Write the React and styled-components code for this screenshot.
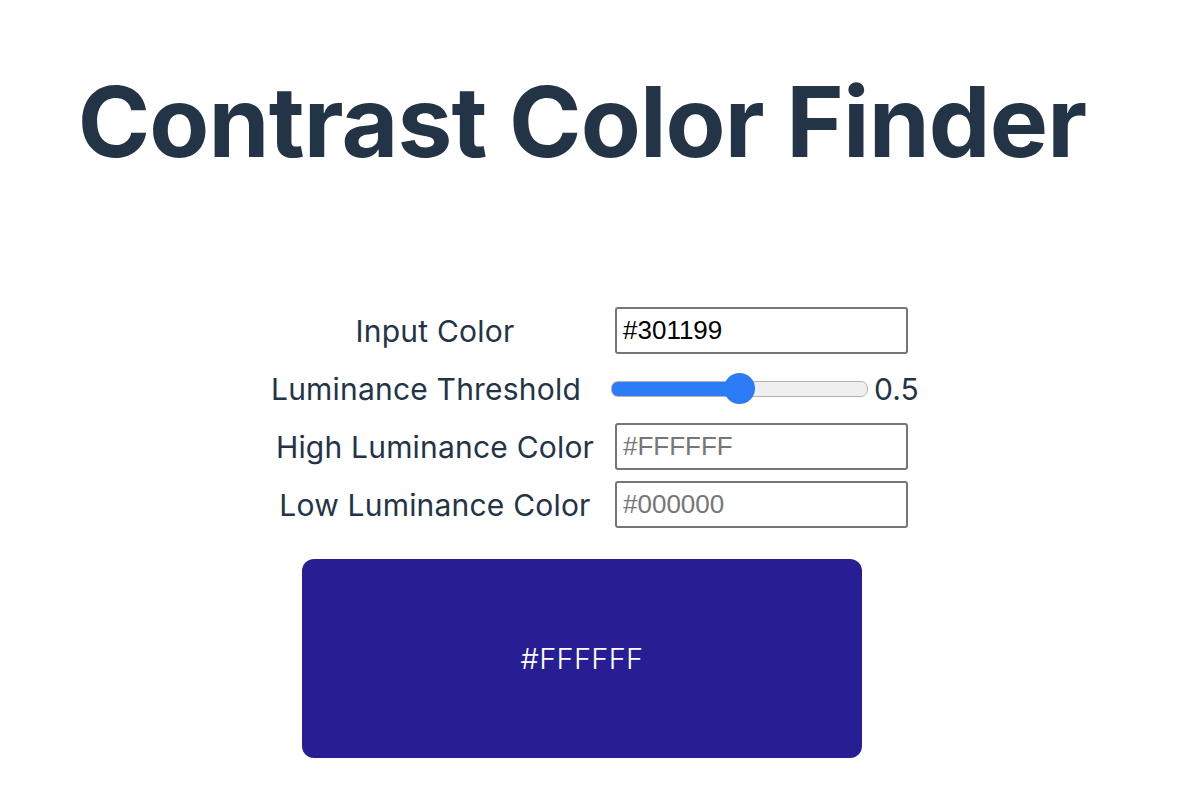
import React from "react";
import styled, { createGlobalStyle } from "styled-components";

const Global = createGlobalStyle`
  body { margin: 0; background: #fff; font-family: Inter, "Noto Sans", sans-serif; }
`;

const Page = styled.div`
  display: flex;
  flex-direction: column;
  align-items: center;
  padding-right: 20px;
`;

const Title = styled.h1`
  margin: 62px 0 0 0;
  font-size: 98px;
  line-height: 120px;
  font-weight: 700;
  color: #243447;
  letter-spacing: -0.85px;
`;

const Form = styled.div`
  margin-top: 125px;
  display: grid;
  grid-template-columns: 330px 305px;
  column-gap: 15px;
  row-gap: 11px;
  align-items: center;
  margin-left: 26px;
`;

const Label = styled.label`
  text-align: center;
  font-size: 30px;
  letter-spacing: 0.2px;
  color: #243447;
  margin-left: ${(p) => (p.$wide ? "-18px" : "0")};
`;

const TextInput = styled.input`
  box-sizing: border-box;
  width: 293px;
  height: 47px;
  border: 2px solid #767676;
  border-radius: 3px;
  padding: 0 6px;
  font-family: "Liberation Sans", Arial, sans-serif;
  font-size: 26px;
  color: #000;
  outline: none;
  &::placeholder { color: #767676; }
`;

const SliderRow = styled.div`
  display: flex;
  align-items: center;
  gap: 6px;
  height: 47px;
`;

const Range = styled.input`
  -webkit-appearance: none;
  appearance: none;
  width: 255px;
  height: 14px;
  margin: 0 0 0 -4px;
  border-radius: 7px;
  border: 1.5px solid #b2b2b2;
  background: linear-gradient(to right, #2b7cf6 0 50%, #efefef 50% 100%);
  outline: none;
  &::-webkit-slider-thumb {
    -webkit-appearance: none;
    width: 31px;
    height: 31px;
    border-radius: 50%;
    background: #2b7cf6;
    border: none;
  }
`;

const Value = styled.span`
  font-size: 30px;
  color: #243447;
`;

const Result = styled.div`
  margin-top: 31px;
  width: 560px;
  height: 199px;
  border-radius: 12px;
  background: ${(p) => p.$bg};
  color: ${(p) => p.$fg};
  display: flex;
  align-items: center;
  justify-content: center;
  font-size: 29px;
  font-weight: 300;
  letter-spacing: 0.3px;
`;

export default function App() {
  return (
    <Page>
      <Global />
      <Title>Contrast Color Finder</Title>
      <Form>
        <Label>Input Color</Label>
        <TextInput defaultValue="#301199" />
        <Label $wide>Luminance Threshold</Label>
        <SliderRow>
          <Range type="range" min="0" max="1" step="0.1" defaultValue="0.5" />
          <Value>0.5</Value>
        </SliderRow>
        <Label>High Luminance Color</Label>
        <TextInput placeholder="#FFFFFF" />
        <Label>Low Luminance Color</Label>
        <TextInput placeholder="#000000" />
      </Form>
      <Result $bg="#281e93" $fg="#ffffff">#FFFFFF</Result>
    </Page>
  );
}
